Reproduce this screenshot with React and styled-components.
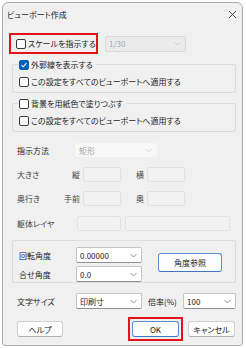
import React from 'react';
import styled, { createGlobalStyle } from 'styled-components';

const GlobalStyle = createGlobalStyle`
  html, body { margin: 0; padding: 0; background: #ffffff; }
  body {
    font-family: "Noto Sans CJK JP", "Noto Sans", sans-serif;
    font-size: 8px;
    color: #1b1b1b;
    font-feature-settings: "palt";
  }
  * { box-sizing: border-box; }
`;

const Window = styled.div`
  margin: 2px 0 0 2px;
  width: 241px;
  height: 344px;
  border: 1px solid #adadad;
  border-radius: 6px 6px 3px 3px;
  background: #f0f0f0;
  display: flex;
  flex-direction: column;
  overflow: hidden;
`;

const TitleBar = styled.div`
  height: 22px;
  display: flex;
  align-items: center;
  justify-content: space-between;
  padding: 0 5px 0 4px;
  font-size: 8px;
`;

const Content = styled.div`
  padding: 8px 6px 0 6px;
  display: flex;
  flex-direction: column;
`;

const Row = styled.div`
  display: flex;
  align-items: center;
  height: ${p => p.$h || 15}px;
  margin-top: ${p => p.$mt || 0}px;
  padding-left: ${p => p.$pl || 0}px;
  flex-shrink: 0;
`;

// red highlight frame drawn around a control
const RedBox = styled.div`
  display: flex;
  align-items: center;
  justify-content: ${p => (p.$center ? 'center' : 'flex-start')};
  width: ${p => p.$w}px;
  height: ${p => p.$h}px;
  margin-left: ${p => p.$ml || 0}px;
  border: 2px solid #e3121b;
  padding-left: ${p => (p.$center ? 0 : 5)}px;
  background: #f0f0f0;
  flex-shrink: 0;
`;

const Box = styled.span`
  width: 10px;
  height: 10px;
  border-radius: 2px;
  border: 1px solid ${p => (p.$checked ? '#005fb8' : '#3a3a3a')};
  background: ${p => (p.$checked ? '#005fb8' : '#fbfbfb')};
  display: inline-flex;
  align-items: center;
  justify-content: center;
  margin-right: 2px;
  flex-shrink: 0;
`;

const Check = ({ checked, children }) => (
  <>
    <Box $checked={checked}>
      {checked && (
        <svg width="8" height="8" viewBox="0 0 8 8">
          <polyline points="1.5,4.2 3.2,5.8 6.5,2.2" fill="none" stroke="#fff" strokeWidth="1.1" />
        </svg>
      )}
    </Box>
    <span>{children}</span>
  </>
);

const Group = styled.div`
  margin: ${p => p.$mt}px 0 0 3px;
  border: 1px solid #dcdcdc;
  border-radius: 2px;
  padding: ${p => (p.$legend ? '0 0 5px 6px' : '6px 0 0 6px')};
  display: flex;
  flex-direction: ${p => (p.$legend ? 'column' : 'row')};
`;

const Legend = styled.div`
  display: flex;
  align-items: center;
  align-self: flex-start;
  height: 11px;
  margin-top: -6px;
  padding-right: 3px;
  background: #f0f0f0;
`;

const Label = styled.span`
  width: ${p => p.$w}px;
  flex-shrink: 0;
  color: ${p => (p.$muted ? '#444' : '#1b1b1b')};
  text-align: ${p => (p.$right ? 'right' : 'left')};
  padding-right: ${p => (p.$right ? 3 : 0)}px;
  padding-left: ${p => p.$pl || 0}px;
  white-space: nowrap;
`;

const Field = styled.div`
  width: ${p => p.$w}px;
  height: 15px;
  margin-left: ${p => p.$ml || 0}px;
  border: 1px solid #e2e2e2;
  border-radius: 2px;
  background: #f2f2f2;
  flex-shrink: 0;
`;

const ComboBox = styled.div`
  width: ${p => p.$w}px;
  height: ${p => p.$h || 16}px;
  display: flex;
  align-items: center;
  justify-content: space-between;
  padding: 0 4px 0 3px;
  border-radius: 2px;
  flex-shrink: 0;
  border: 1px solid ${p => (p.$variant === 'ghost' ? '#f7f7f7' : p.$variant === 'disabled' ? '#dadada' : '#c4c4c4')};
  border-bottom-color: ${p => (p.$variant ? (p.$variant === 'ghost' ? '#f7f7f7' : '#dadada') : '#8f8f8f')};
  background: ${p => (p.$variant === 'ghost' ? '#f8f8f8' : p.$variant === 'disabled' ? '#ebebeb' : '#ffffff')};
  color: ${p => (p.$variant ? '#a5a5a5' : '#1b1b1b')};
`;

const Chevron = ({ color }) => (
  <svg width="7" height="5" viewBox="0 0 7 5">
    <polyline points="0.5,1 3.5,4 6.5,1" fill="none" stroke={color} strokeWidth="0.8" />
  </svg>
);

const Combo = ({ w, h, variant, children }) => (
  <ComboBox $w={w} $h={h} $variant={variant}>
    <span>{children}</span>
    <Chevron color={variant ? '#c8c8c8' : '#7a7a7a'} />
  </ComboBox>
);

const Stack = styled.div`
  display: flex;
  flex-direction: column;
  gap: 3px;
`;

const Button = styled.div`
  width: ${p => p.$w}px;
  height: ${p => p.$h || 16}px;
  margin-left: ${p => p.$ml || 0}px;
  margin-top: ${p => p.$mt || 0}px;
  display: flex;
  align-items: center;
  justify-content: center;
  flex-shrink: 0;
  background: #fdfdfd;
  border: 1px solid ${p => (p.$primary ? '#5c8fcf' : '#d0d0d0')};
  border-bottom-color: ${p => (p.$primary ? '#3f76bf' : '#b0b0b0')};
  border-radius: 3px;
`;

export default function App() {
  return (
    <>
      <GlobalStyle />
      <Window>
        <TitleBar>
          <span>ビューポート作成</span>
          <svg width="9" height="9" viewBox="0 0 9 9">
            <path d="M1 1L8 8M8 1L1 8" stroke="#333" strokeWidth="0.9" />
          </svg>
        </TitleBar>
        <Content>
          <Row $h={21}>
            <RedBox $w={89} $h={21}>
              <Check>スケールを指示する</Check>
            </RedBox>
            <Label $w={7} />
            <Combo w={81} variant="disabled">1/30</Combo>
          </Row>

          <Group $mt={10} $legend>
            <Legend><Check checked>外郭線を表示する</Check></Legend>
            <Row $h={11} $mt={6}><Check>この設定をすべてのビューポートへ適用する</Check></Row>
          </Group>

          <Group $mt={10} $legend>
            <Legend><Check>背景を用紙色で塗りつぶす</Check></Legend>
            <Row $h={11} $mt={6}><Check>この設定をすべてのビューポートへ適用する</Check></Row>
          </Group>

          <Row $h={14} $mt={11} $pl={8}>
            <Label $w={58}>指示方法</Label>
            <Combo w={82} h={14} variant="ghost">矩形</Combo>
          </Row>

          <Row $mt={10} $pl={8}>
            <Label $w={46} $muted>大きさ</Label>
            <Label $w={20} $right $muted>縦</Label>
            <Field $w={38} />
            <Label $w={26} $right $muted>横</Label>
            <Field $w={38} />
          </Row>

          <Row $mt={9} $pl={8}>
            <Label $w={46} $muted>奥行き</Label>
            <Label $w={20} $right $muted>手前</Label>
            <Field $w={38} />
            <Label $w={26} $right $muted>奥</Label>
            <Field $w={38} />
          </Row>

          <Row $mt={10} $pl={8}>
            <Label $w={60} $muted>躯体レイヤ</Label>
            <Field $w={44} />
            <Field $w={105} $ml={4} />
          </Row>

          <Group $mt={9}>
            <Stack>
              <Row $h={16}>
                <Label $w={57}>回転角度</Label>
                <Combo w={66}>0.00000</Combo>
              </Row>
              <Row $h={16}>
                <Label $w={57}>合せ角度</Label>
                <Combo w={66}>0.0</Combo>
              </Row>
            </Stack>
            <Button $w={64} $h={19} $ml={16} $mt={6} $primary>角度参照</Button>
          </Group>

          <Row $h={16} $mt={10} $pl={8}>
            <Label $w={59}>文字サイズ</Label>
            <Combo w={66}>印刷寸</Combo>
            <Label $w={41} $pl={6}>倍率(%)</Label>
            <Combo w={53}>100</Combo>
          </Row>

          <Row $h={24} $mt={8} $pl={8}>
            <Button $w={46}>ヘルプ</Button>
            <RedBox $w={55} $h={24} $ml={65} $center>
              <Button $w={47} $primary>OK</Button>
            </RedBox>
            <Button $w={47} $ml={5}>キャンセル</Button>
          </Row>
        </Content>
      </Window>
    </>
  );
}
